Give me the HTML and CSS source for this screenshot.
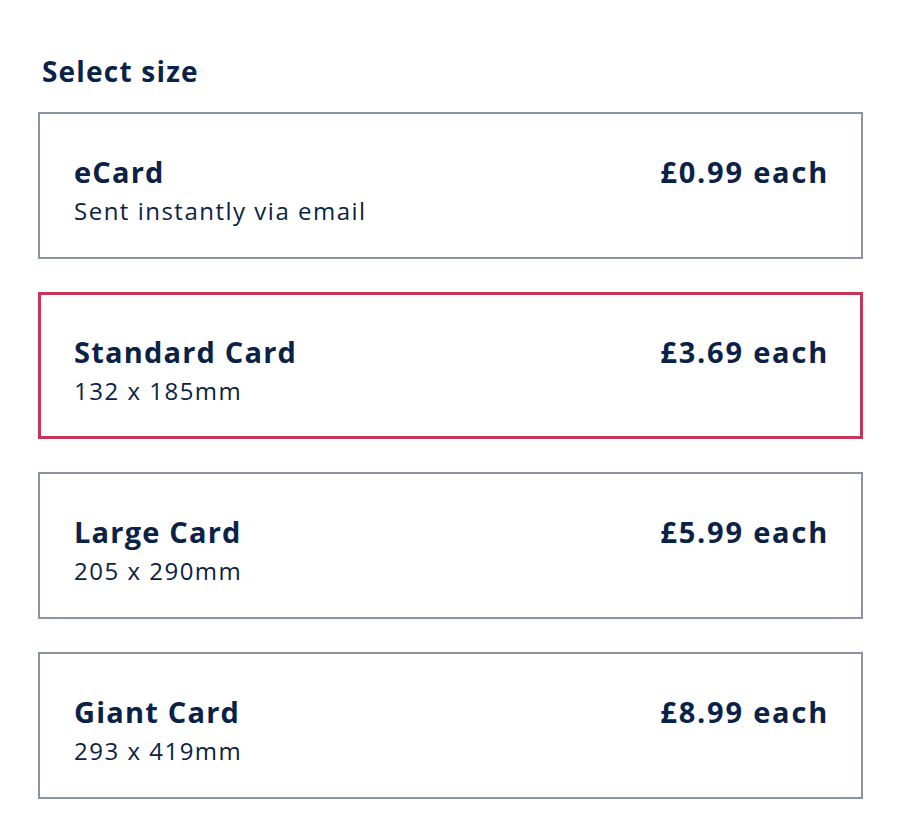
FILE: index.html
```html
<!DOCTYPE html>
<html lang="en">
<head>
    <meta charset="UTF-8">
    <meta name="viewport" content="width=device-width, initial-scale=1.0">
    <title>Select size</title>
    <link rel="stylesheet" href="styles.css">
</head>
<body>
    <div class="size-picker">
        <h2>Select size</h2>

        <div class="size-list">
            <div class="size-option">
                <div class="size-info">
                    <div class="size-name">eCard</div>
                    <div class="size-detail">Sent instantly via email</div>
                </div>
                <div class="size-price">£0.99 each</div>
            </div>

            <div class="size-option selected">
                <div class="size-info">
                    <div class="size-name">Standard Card</div>
                    <div class="size-detail">132 x 185mm</div>
                </div>
                <div class="size-price">£3.69 each</div>
            </div>

            <div class="size-option">
                <div class="size-info">
                    <div class="size-name">Large Card</div>
                    <div class="size-detail">205 x 290mm</div>
                </div>
                <div class="size-price">£5.99 each</div>
            </div>

            <div class="size-option">
                <div class="size-info">
                    <div class="size-name">Giant Card</div>
                    <div class="size-detail">293 x 419mm</div>
                </div>
                <div class="size-price">£8.99 each</div>
            </div>
        </div>
    </div>
</body>
</html>
```

FILE: styles.css
```css
body {
    font-family: "Open Sans", Lato, Arial, sans-serif;
    background-color: #fff;
    margin: 0;
    padding: 0;
    color: #0b2247;
}
.size-picker {
    padding: 52px 42px 0 38px;
}
h2 {
    margin: 0 0 22px 4px;
    font-size: 28px;
    line-height: 38px;
    font-weight: bold;
    letter-spacing: 1.2px;
}
.size-list {
    display: flex;
    flex-direction: column;
    gap: 33px;
    width: 825px;
}
.size-option {
    box-sizing: border-box;
    height: 147px;
    border: 2px solid #8a93a2;
    padding: 39px 34px 0 34px;
    display: flex;
    justify-content: space-between;
    align-items: flex-start;
}
.size-option.selected {
    border: 3px solid #c9355a;
    padding: 38px 33px 0 33px;
}
.size-name {
    font-size: 29px;
    line-height: 38px;
    font-weight: bold;
    letter-spacing: 1.2px;
}
.size-detail {
    margin-top: 3px;
    font-size: 24px;
    line-height: 34px;
    letter-spacing: 1.5px;
}
.size-price {
    font-size: 29px;
    line-height: 38px;
    font-weight: bold;
    letter-spacing: 1.8px;
    margin-right: -2px;
}
```
